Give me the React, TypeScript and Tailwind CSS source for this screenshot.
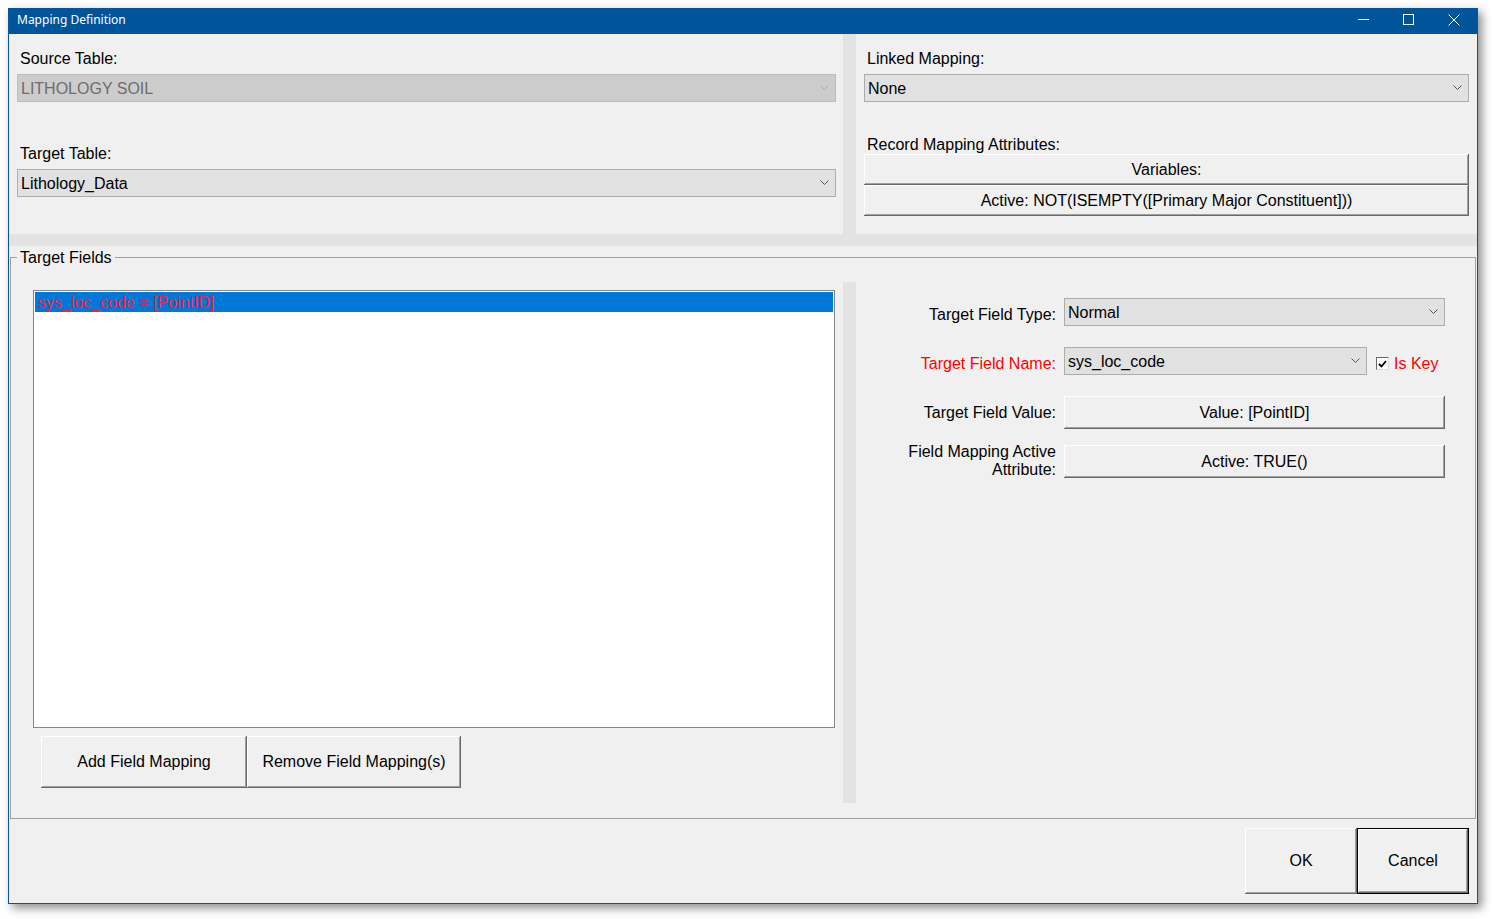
import React from 'react';

const font = "font-['Liberation_Sans',Arial,sans-serif]";
const btn3d =
  'bg-[#f0f0f0] shadow-[inset_-1px_-1px_0_#696969,inset_1px_1px_0_#ffffff,inset_-2px_-2px_0_#a0a0a0] flex items-center justify-center text-[16px] text-black';

function Chevron({ color = '#555' }: { color?: string }) {
  return (
    <svg width="9" height="6" viewBox="0 0 9 6" className="shrink-0">
      <polyline points="0.5,0.5 4.5,4.5 8.5,0.5" fill="none" stroke={color} strokeWidth="1" />
    </svg>
  );
}

function Combo({ value, disabled, className = '' }: { value: string; disabled?: boolean; className?: string }) {
  return (
    <div
      className={`flex h-[28px] items-center justify-between border pl-[3px] pr-[6px] text-[16px] ${
        disabled ? 'border-[#bcbcbc] bg-[#cccccc] text-[#6d6d6d]' : 'border-[#adadad] bg-[#e1e1e1] text-black'
      } ${className}`}
    >
      <span className="pt-[2px]">{value}</span>
      <Chevron color={disabled ? '#a8a8a8' : '#555'} />
    </div>
  );
}

function Label({ children, red }: { children: React.ReactNode; red?: boolean }) {
  return <div className={`pl-[3px] text-[16px] leading-[18px] ${red ? 'text-[#ff0000]' : 'text-black'}`}>{children}</div>;
}

function TitleBar() {
  return (
    <div className="flex h-[25px] items-center justify-between bg-[#005499] pb-[4px] pl-[8px] text-white">
      <span className="font-['Noto_Sans',sans-serif] text-[12px]">Mapping Definition</span>
      <div className="flex h-full items-center">
        <div className="flex w-[45px] justify-center">
          <svg width="11" height="11" viewBox="0 0 11 11">
            <line x1="0" y1="5.5" x2="11" y2="5.5" stroke="#fff" strokeWidth="1" />
          </svg>
        </div>
        <div className="flex w-[45px] justify-center">
          <svg width="11" height="11" viewBox="0 0 11 11">
            <rect x="0.5" y="0.5" width="10" height="10" fill="none" stroke="#fff" strokeWidth="1" />
          </svg>
        </div>
        <div className="flex w-[46px] justify-center">
          <svg width="12" height="12" viewBox="0 0 12 12">
            <path d="M0.5 0.5 L11.5 11.5 M11.5 0.5 L0.5 11.5" stroke="#fff" strokeWidth="1" />
          </svg>
        </div>
      </div>
    </div>
  );
}

function FieldRow({
  label,
  red,
  controlHeight,
  children,
}: {
  label: React.ReactNode;
  red?: boolean;
  controlHeight: string;
  children: React.ReactNode;
}) {
  return (
    <div className="flex h-[49px] items-start gap-[8px]">
      <div
        className={`flex w-[200px] items-center justify-end text-right text-[16px] leading-[18px] ${controlHeight} ${
          red ? 'text-[#ff0000]' : 'text-black'
        }`}
      >
        <div>{label}</div>
      </div>
      {children}
    </div>
  );
}

export default function App() {
  return (
    <div className={`h-[919px] w-[1494px] bg-white pl-[8px] pt-[8px] ${font}`}>
      <div className="flex h-[896px] w-[1470px] flex-col border border-[#0a5597] bg-[#f0f0f0] shadow-[4px_4px_9px_rgba(0,0,0,0.45)]">
        <TitleBar />

        {/* top section */}
        <div className="flex h-[200px]">
          <div className="w-[834px] px-[8px] pt-[16px]">
            <Label>Source Table:</Label>
            <Combo value="LITHOLOGY SOIL" disabled className="mt-[6px] mr-[-1px]" />
            <div className="mt-[43px]">
              <Label>Target Table:</Label>
            </div>
            <Combo value="Lithology_Data" className="mt-[6px] mr-[-1px]" />
          </div>
          <div className="w-[13px] bg-[#e3e3e3]" />
          <div className="flex-1 px-[8px] pt-[16px]">
            <Label>Linked Mapping:</Label>
            <Combo value="None" className="mt-[6px]" />
            <div className="mt-[34px]">
              <Label>Record Mapping Attributes:</Label>
            </div>
            <div className={`h-[31px] ${btn3d}`}>Variables:</div>
            <div className={`h-[31px] ${btn3d}`}>Active: NOT(ISEMPTY([Primary Major Constituent]))</div>
          </div>
        </div>
        <div className="h-[12px] bg-[#e3e3e3]" />

        {/* target fields group */}
        <fieldset className="mx-[1px] h-[573px] border border-[#a0a0a0] pb-[15px]">
          <legend className="ml-[6px] px-[3px] pt-[1px] text-[16px] leading-[21px] text-black">Target Fields</legend>
          <div className="mt-[14px] flex h-[521px]">
            <div className="w-[832px] pl-[22px] pr-[8px] pt-[8px]">
              <div className="h-[438px] border border-[#828790] bg-white p-[1px]">
                <div className="h-[20px] bg-[#0078d7] pl-[3px] pt-[1px] text-[16px] leading-[19px] text-[#ff1a3c]">
                  sys_loc_code = [PointID]
                </div>
              </div>
              <div className="mt-[8px] flex pl-[8px]">
                <div className={`h-[52px] w-[206px] ${btn3d}`}>Add Field Mapping</div>
                <div className={`h-[52px] w-[214px] ${btn3d}`}>Remove Field Mapping(s)</div>
              </div>
            </div>
            <div className="w-[13px] bg-[#e3e3e3]" />
            <div className="flex-1 pt-[16px]">
              <FieldRow label="Target Field Type:" controlHeight="h-[28px] pt-[5px]">
                <Combo value="Normal" className="w-[381px]" />
              </FieldRow>
              <FieldRow label="Target Field Name:" red controlHeight="h-[28px] pt-[5px]">
                <Combo value="sys_loc_code" className="w-[303px]" />
                <div className="flex h-[28px] items-center gap-[5px] pl-[1px] pt-[5px]">
                  <div className="flex h-[13px] w-[13px] items-center justify-center border border-t-[#6a6a6a] border-l-[#6a6a6a] border-r-[#e0e0e0] border-b-[#e0e0e0] bg-white">
                    <svg width="9" height="8" viewBox="0 0 9 8">
                      <polyline points="1,4 3.5,6.5 8,1" fill="none" stroke="#000" strokeWidth="1.8" />
                    </svg>
                  </div>
                  <span className="text-[16px] text-[#ff0000]">Is Key</span>
                </div>
              </FieldRow>
              <FieldRow label="Target Field Value:" controlHeight="h-[33px]">
                <div className={`h-[33px] w-[381px] ${btn3d}`}>Value: [PointID]</div>
              </FieldRow>
              <FieldRow
                label={
                  <>
                    Field Mapping Active
                    <br />
                    Attribute:
                  </>
                }
                controlHeight="h-[33px] pb-[1px]"
              >
                <div className={`h-[33px] w-[381px] ${btn3d}`}>Active: TRUE()</div>
              </FieldRow>
            </div>
          </div>
        </fieldset>

        {/* dialog buttons */}
        <div className="flex flex-1 justify-end pr-[8px] pt-[9px]">
          <div className={`h-[66px] w-[112px] ${btn3d}`}>OK</div>
          <div className={`h-[66px] w-[112px] border border-black ${btn3d}`}>Cancel</div>
        </div>
      </div>
    </div>
  );
}
